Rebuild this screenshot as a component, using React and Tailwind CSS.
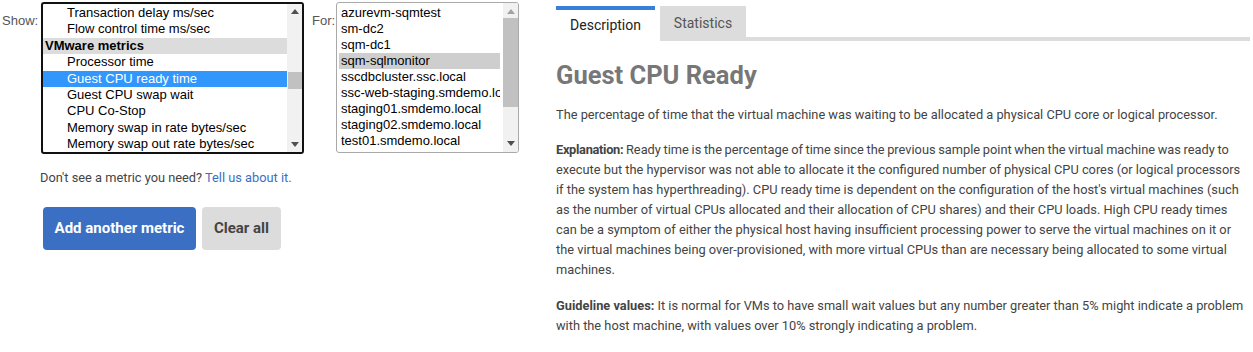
import React from 'react';

const metrics = [
  { label: 'Transaction delay ms/sec' },
  { label: 'Flow control time ms/sec' },
  { label: 'VMware metrics', group: true },
  { label: 'Processor time' },
  { label: 'Guest CPU ready time', selected: true },
  { label: 'Guest CPU swap wait' },
  { label: 'CPU Co-Stop' },
  { label: 'Memory swap in rate bytes/sec' },
  { label: 'Memory swap out rate bytes/sec' },
];

const machines = [
  'azurevm-sqmtest',
  'sm-dc2',
  'sqm-dc1',
  'sqm-sqlmonitor',
  'sscdbcluster.ssc.local',
  'ssc-web-staging.smdemo.local',
  'staging01.smdemo.local',
  'staging02.smdemo.local',
  'test01.smdemo.local',
];

function Arrow({ up, light }) {
  return (
    <svg width="8" height="5" viewBox="0 0 8 5" className="block">
      <path d={up ? 'M0 5 L4 0 L8 5 Z' : 'M0 0 L4 5 L8 0 Z'} fill={light ? '#a3a3a3' : '#505050'} />
    </svg>
  );
}

export default function App() {
  return (
    <div className="flex w-[1253px] h-[352px] bg-white overflow-hidden text-[#444]">
      {/* Left: metric pickers */}
      <div className="w-[556px] shrink-0 pt-[2px]">
        <div className="flex items-start font-['Liberation_Sans',Arial,sans-serif] text-[13px]">
          <div className="w-[41px] pl-[2px] pt-[9px] text-[#555]">Show:</div>
          <div className="w-[263px] h-[152px] border-2 border-[#111] rounded-[3px] flex overflow-hidden text-black">
            <div className="flex-1 pt-[1px]">
              {metrics.map((m) =>
                m.group ? (
                  <div key={m.label} className="h-[16.4px] leading-[16.4px] pl-[2px] bg-[#dcdcdc] font-bold">
                    {m.label}
                  </div>
                ) : (
                  <div
                    key={m.label}
                    className={`h-[16.4px] leading-[16.4px] pl-[24px] whitespace-nowrap ${m.selected ? 'bg-[#3297fd] text-white' : ''}`}
                  >
                    {m.label}
                  </div>
                )
              )}
            </div>
            <div className="w-[15px] bg-[#f1f1f1] flex flex-col items-center justify-between py-[5px] relative">
              <Arrow up />
              <div className="absolute left-[1px] right-0 top-[68px] h-[17px] bg-[#c1c1c1]" />
              <Arrow />
            </div>
          </div>
          <div className="w-[32px] pl-[8px] pt-[9px] text-[#555]">For:</div>
          <div className="w-[183px] h-[151px] border border-[#a9a9a9] rounded-[3px] flex overflow-hidden text-black">
            <div className="flex-1 min-w-0 pt-[2px] pl-[2px] overflow-hidden">
              {machines.map((m) => (
                <div
                  key={m}
                  className={`h-[16px] leading-[16px] pl-[2px] whitespace-nowrap overflow-hidden ${m === 'sqm-sqlmonitor' ? 'bg-[#cecece]' : ''}`}
                >
                  {m}
                </div>
              ))}
            </div>
            <div className="w-[15px] ml-[3px] bg-[#f1f1f1] flex flex-col items-center justify-between py-[6px] relative">
              <Arrow up light />
              <div className="absolute left-0 right-0 top-[15px] h-[89px] bg-[#c1c1c1]" />
              <Arrow />
            </div>
          </div>
        </div>

        <p className="font-['Roboto',sans-serif] text-[12.8px] pl-[40px] mt-[14px] text-[#444]">
          Don't see a metric you need? <span className="text-[#3b6fc4]">Tell us about it.</span>
        </p>

        <div className="flex gap-[6px] pl-[43px] mt-[20px] font-['Roboto',sans-serif] text-[15px] font-bold">
          <button className="h-[43px] w-[153px] rounded-[4px] bg-[#3a6fc4] text-white">Add another metric</button>
          <button className="h-[43px] w-[79px] rounded-[4px] bg-[#dcdcdc] text-[#444]">Clear all</button>
        </div>
      </div>

      {/* Right: description */}
      <div className="w-[697px] shrink-0 pt-[6px] font-['Roboto',sans-serif]">
        <div className="flex items-end">
          <div className="w-[99px] h-[35px] border-t-4 border-[#3a7fd6] flex items-center justify-center text-[14px] text-[#222] bg-white">
            Description
          </div>
          <div className="w-[5px] h-[4px] bg-white" />
          <div className="w-[86px] h-[35px] bg-[#dcdcdc] flex items-center justify-center text-[14px] text-[#555]">
            Statistics
          </div>
          <div className="flex-1 h-[4px] bg-[#dcdcdc] mr-[3px]" />
        </div>

        <h1 className="text-[25.5px] font-bold text-[#777] mt-[19px] leading-[30px]">Guest CPU Ready</h1>

        <div className="text-[12.8px] leading-[20px] text-[#444] mt-[15px] pr-[7px]">
          <p className="mb-[15px]">
            The percentage of time that the virtual machine was waiting to be allocated a physical CPU core or logical processor.
          </p>
          <p className="mb-[16px]">
            <b className="tracking-[-0.3px]">Explanation:</b>
            <span className="[word-spacing:-0.5px]"> Ready time is the percentage of time since the previous sample point when the virtual machine was ready to</span> execute but the hypervisor was not able to allocate it the configured number of physical CPU cores (or logical processors if the system has hyperthreading). CPU ready time is dependent on the configuration of the host's virtual machines (such as the number of virtual CPUs allocated and their allocation of CPU shares) and their CPU loads. High CPU ready times can be a symptom of either the physical host having insufficient processing power to serve the virtual machines on it or the virtual machines being over-provisioned, with more virtual CPUs than are necessary being allocated to some virtual machines.
          </p>
          <p>
            <b>Guideline values:</b> It is normal for VMs to have small wait values but any number greater than 5% might indicate a problem with the host machine, with values over 10% strongly indicating a problem.
          </p>
        </div>
      </div>
    </div>
  );
}
